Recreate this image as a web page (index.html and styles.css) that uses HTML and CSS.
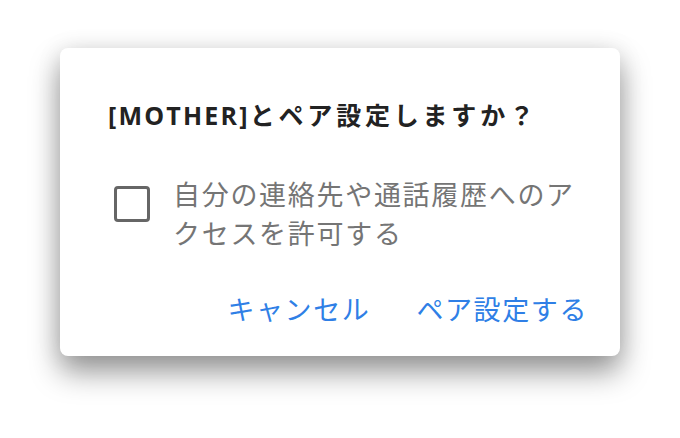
FILE: index.html
```html
<!DOCTYPE html>
<html lang="ja">
  <head>
    <meta charset="UTF-8" />
    <meta name="viewport" content="width=device-width, initial-scale=1.0" />
    <title>ペア設定</title>
    <link rel="stylesheet" href="styles.css">
  </head>
  <body>
    <div class="dialog">
      <h2 class="dialog-title"><span class="device-name">[MOTHER]</span>とペア設定しますか？</h2>

      <label class="dialog-option">
        <input type="checkbox" class="option-input" />
        <span class="option-box"></span>
        <span class="option-text">自分の連絡先や通話履歴へのアクセスを許可する</span>
      </label>

      <div class="dialog-actions">
        <button class="action-btn" id="cancelBtn">キャンセル</button>
        <button class="action-btn" id="pairBtn">ペア設定する</button>
      </div>
    </div>
  </body>
</html>
```

FILE: styles.css
```css
html,
body {
  min-height: 100%;
}

body {
  margin: 0;

  padding: 48px 0 80px;

  background-color: #fff;

  font-family: "Open Sans", "Noto Sans CJK JP", sans-serif;
}

.dialog {
  width: 560px;

  box-sizing: border-box;

  margin: 0 auto;

  padding: 51px 32px 27px 48px;

  background-color: #fff;

  border-radius: 8px;

  box-shadow: 0 16px 30px rgba(0, 0, 0, 0.4), 0 2px 24px rgba(0, 0, 0, 0.1);
}

.dialog-title {
  margin: 0;

  font-size: 25px;

  line-height: 32px;

  font-weight: 700;

  letter-spacing: 3.8px;

  color: #222;

  white-space: nowrap;
}

.device-name {
  letter-spacing: 2.2px;
}

.dialog-option {
  display: flex;

  align-items: flex-start;

  margin-top: 43px;

  cursor: pointer;
}

.option-input {
  display: none; /* the box below is drawn instead */
}

.option-box {
  flex: none;

  width: 36px;

  height: 36px;

  box-sizing: border-box;

  margin: 12px 0 0 6px;

  border: 3.5px solid #666;

  border-radius: 4px;
}

.option-text {
  width: 404px;

  margin-left: 23px;

  font-family: "Noto Sans CJK JP", sans-serif;

  font-size: 27px;

  line-height: 39px;

  letter-spacing: 1.7px;

  color: #757575;
}

.dialog-actions {
  display: flex;

  justify-content: flex-end;

  gap: 46px;

  margin-top: 37px;
}

.action-btn {
  padding: 0;

  background: none;

  border: none;

  font-family: "Noto Sans CJK JP", sans-serif;

  font-size: 27px;

  line-height: 40px;

  letter-spacing: 1.6px;

  color: #2f7fe6;

  cursor: pointer;
}
```
